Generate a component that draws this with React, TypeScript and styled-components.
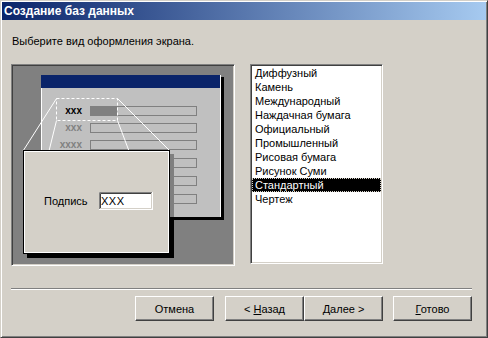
import React from "react";
import styled, { createGlobalStyle } from "styled-components";

const Colors = {
  face: "#d4d0c8",
  shadow: "#808080",
  darkShadow: "#404040",
  light: "#ffffff",
  navy: "#0a246a",
  sky: "#a6caf0",
  silver: "#c0c0c0",
};

const GlobalStyle = createGlobalStyle`
  html, body {
    margin: 0;
    padding: 0;
    background: ${Colors.face};
  }
  body {
    font-family: "Liberation Sans", Arial, sans-serif;
    font-size: 11px;
    color: #000;
  }
`;

const Window = styled.div`
  width: 488px;
  height: 338px;
  box-sizing: border-box;
  display: flex;
  flex-direction: column;
  padding: 1px;
  background: ${Colors.face};
  border: 1px solid;
  border-color: ${Colors.face} ${Colors.darkShadow} ${Colors.darkShadow} ${Colors.face};
  box-shadow: inset 1px 1px ${Colors.light}, inset -1px -1px ${Colors.shadow};
`;

const TitleBar = styled.div`
  height: 18px;
  display: flex;
  align-items: center;
  padding-left: 2px;
  background: linear-gradient(to right, ${Colors.navy}, ${Colors.sky});
  color: #fff;
  font-weight: bold;
  font-size: 12px;
  white-space: nowrap;
`;

const Body = styled.div`
  flex: 1;
  display: flex;
  flex-direction: column;
  padding: 0 14px 0 9px;
`;

const Prompt = styled.div`
  margin-top: 15px;
  height: 13px;
  line-height: 13px;
  padding-left: 1px;
`;

const Content = styled.div`
  display: flex;
  align-items: flex-start;
  gap: 15px;
  margin-top: 16px;
`;

const sunken = `
  box-sizing: border-box;
  border: 1px solid;
  border-color: ${Colors.shadow} ${Colors.light} ${Colors.light} ${Colors.shadow};
  box-shadow: inset 1px 1px ${Colors.darkShadow}, inset -1px -1px ${Colors.face};
`;

const PreviewFrame = styled.div`
  ${sunken}
  width: 224px;
  height: 202px;
  background: ${Colors.shadow};

  svg {
    display: block;
  }
`;

const ListBox = styled.ul`
  ${sunken}
  width: 133px;
  height: 200px;
  margin: 0;
  padding: 1px;
  list-style: none;
  background: #fff;
`;

const ListItem = styled.li<{ $selected?: boolean }>`
  height: 14px;
  line-height: 14px;
  padding-left: 3px;
  white-space: nowrap;
  background: ${(p) => (p.$selected ? "#000" : "transparent")};
  color: ${(p) => (p.$selected ? "#fff" : "#000")};
  outline: ${(p) => (p.$selected ? `1px dotted ${Colors.face}` : "none")};
  outline-offset: -1px;
`;

const Separator = styled.div`
  margin-top: 22px;
  border-top: 1px solid ${Colors.shadow};
  border-bottom: 1px solid ${Colors.light};
`;

const ButtonRow = styled.div`
  display: flex;
  justify-content: flex-end;
  margin-top: 6px;
  gap: 10px;
`;

const ButtonGroup = styled.div`
  display: flex;
  margin-left: 1px;
`;

const Button = styled.button`
  width: 79px;
  height: 25px;
  padding: 0;
  box-sizing: border-box;
  background: ${Colors.face};
  font-family: "Liberation Sans", Arial, sans-serif;
  font-size: 11px;
  color: #000;
  border: 1px solid;
  border-color: ${Colors.light} ${Colors.darkShadow} ${Colors.darkShadow} ${Colors.light};
  box-shadow: inset -1px -1px ${Colors.shadow}, inset 1px 1px ${Colors.face};

  u {
    text-decoration: underline;
    text-underline-offset: 1px;
  }
`;

const styles = [
  "Диффузный",
  "Камень",
  "Международный",
  "Наждачная бумага",
  "Официальный",
  "Промышленный",
  "Рисовая бумага",
  "Рисунок Суми",
  "Стандартный",
  "Чертеж",
];

const rowTops = [107, 124, 141, 159, 177, 195];

const Preview = () => (
  <svg width={222} height={200} viewBox="13 66 222 200" fontFamily="Liberation Sans, Arial, sans-serif">
    {/* mini form with shadow */}
    <rect x={222} y={78} width={3} height={143} fill="#000" />
    <rect x={45} y={218} width={180} height={3} fill="#000" />
    <rect x={42} y={76} width={180} height={142} fill={Colors.silver} />
    <rect x={221} y={76} width={1} height={142} fill="#fff" />
    <rect x={42} y={89} width={1} height={129} fill="#fff" />
    <rect x={42} y={76} width={179} height={13} fill={Colors.navy} />

    {rowTops.map((y) => (
      <rect key={y} x={91.5} y={y + 0.5} width={106} height={9} fill="none" stroke={Colors.shadow} />
    ))}
    <rect x={91} y={107} width={27} height={10} fill={Colors.shadow} />

    <text x={83} y={115} textAnchor="end" fontSize={10} fontWeight="bold" fill="#000">xxx</text>
    <text x={83} y={132} textAnchor="end" fontSize={10} fontWeight="bold" fill={Colors.shadow}>xxx</text>
    <text x={83} y={149} textAnchor="end" fontSize={10} fontWeight="bold" fill={Colors.shadow}>xxxx</text>

    {/* zoom selection */}
    <rect x={57.5} y={99.5} width={61} height={22} fill="none" stroke="#fff" strokeDasharray="3 2" />
    <g stroke="#fff" strokeWidth={1}>
      <line x1={57.5} y1={99.5} x2={24} y2={152} />
      <line x1={57.5} y1={121.5} x2={50} y2={152} />
      <line x1={118.5} y1={99.5} x2={171} y2={152} />
      <line x1={118.5} y1={121.5} x2={130} y2={152} />
    </g>

    {/* magnified popup */}
    <rect x={171} y={155} width={4} height={63} fill={Colors.shadow} />
    <rect x={171} y={218} width={4} height={41} fill="#000" />
    <rect x={28} y={255} width={147} height={4} fill="#000" />
    <rect x={24} y={151} width={147} height={104} fill={Colors.face} />
    <rect x={24.5} y={151.5} width={146} height={103} fill="none" stroke="#000" />
    <rect x={25.5} y={152.5} width={144} height={101} fill="none" stroke="#fff" />

    <text x={45} y={206} fontSize={11} fill="#000">Подпись</text>

    <rect x={100} y={193} width={54} height={18} fill="#fff" />
    <path d="M100.5 210 V193.5 H153" fill="none" stroke={Colors.shadow} />
    <path d="M101.5 209 V194.5 H152" fill="none" stroke={Colors.darkShadow} />
    <path d="M100 210.5 H153.5 V193" fill="none" stroke="#fff" />
    <path d="M101 209.5 H152.5 V194" fill="none" stroke={Colors.face} />
    <text x={102} y={206} fontSize={11} fontWeight={300} fill="#000" letterSpacing={0.5}>XXX</text>
  </svg>
);

const App: React.FC = () => {
  return (
    <>
      <GlobalStyle />
      <Window>
        <TitleBar>Создание баз данных</TitleBar>
        <Body>
          <Prompt>Выберите вид оформления экрана.</Prompt>
          <Content>
            <PreviewFrame>
              <Preview />
            </PreviewFrame>
            <ListBox>
              {styles.map((s) => (
                <ListItem key={s} $selected={s === "Стандартный"}>
                  {s}
                </ListItem>
              ))}
            </ListBox>
          </Content>
          <Separator />
          <ButtonRow>
            <Button>Отмена</Button>
            <ButtonGroup>
              <Button>
                &lt; <u>Н</u>азад
              </Button>
              <Button>
                <u>Д</u>алее &gt;
              </Button>
            </ButtonGroup>
            <Button>
              <u>Г</u>отово
            </Button>
          </ButtonRow>
        </Body>
      </Window>
    </>
  );
};

export default App;
